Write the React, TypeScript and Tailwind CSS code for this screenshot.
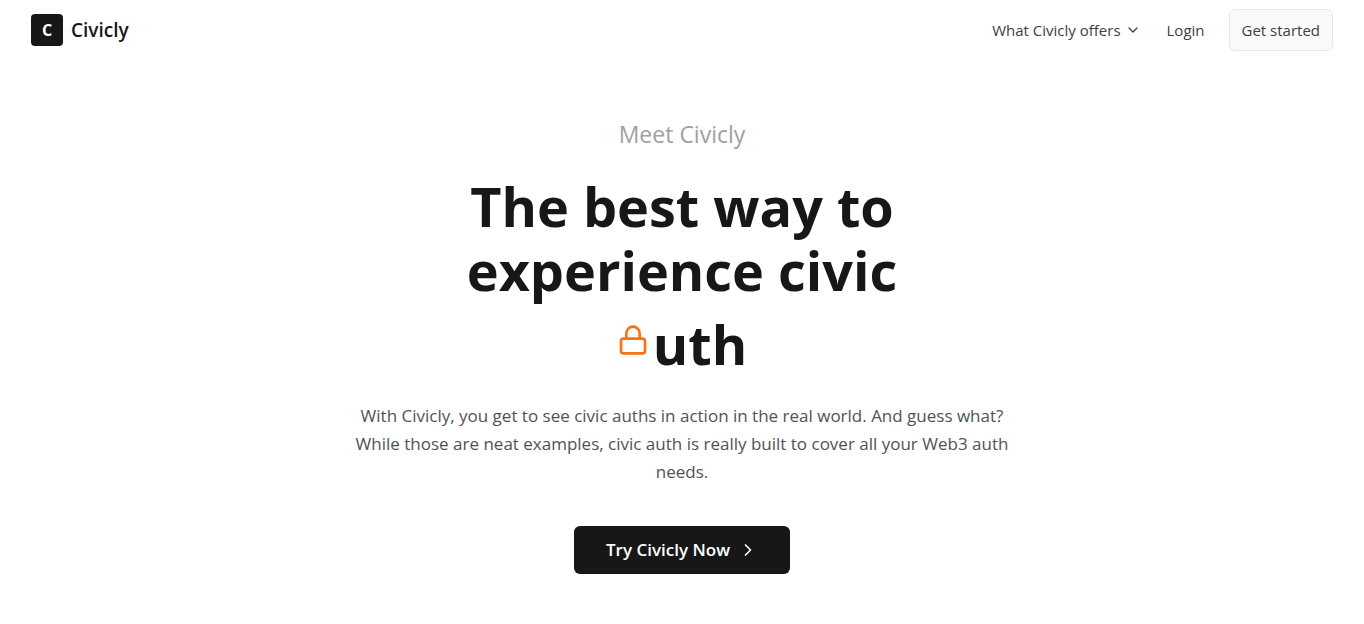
import { ChevronDown, ChevronRight, Lock } from "lucide-react";

function Header() {
  return (
    <header className="flex items-center justify-between px-[31px] py-[9px]">
      <a href="#" className="flex items-center gap-2">
        <span className="flex size-8 items-center justify-center rounded bg-neutral-900 text-base font-bold text-white">
          C
        </span>
        <span className="text-[19px] font-semibold text-neutral-900">Civicly</span>
      </a>
      <nav className="flex items-center gap-6 text-[15px] text-neutral-700">
        <button type="button" className="flex items-center gap-1 pr-0.5">
          What Civicly offers
          <ChevronDown className="size-4" />
        </button>
        <a href="#login">Login</a>
        <a
          href="#start"
          className="flex h-[42px] items-center rounded-md border border-neutral-200 bg-neutral-50 px-3"
        >
          Get started
        </a>
      </nav>
    </header>
  );
}

function Hero() {
  return (
    <main className="flex flex-col items-center px-4 pt-[58px] pb-12 text-center">
      <p className="text-[23px] leading-8 text-neutral-400">Meet Civicly</p>
      <h1 className="mt-6 text-[54px] leading-16 font-bold text-neutral-900">
        <span className="block">The best way to</span>
        <span className="block">experience civic</span>
        <span className="mt-2.5 flex items-center justify-center gap-1">
          <Lock className="mb-2 size-8 text-[#f97316]" />
          uth
        </span>
      </h1>
      <p className="mt-[26px] max-w-[672px] text-[17px] leading-7 text-neutral-600">
        With Civicly, you get to see civic auths in action in the real world. And guess what? While
        those are neat examples, civic auth is really built to cover all your Web3 auth needs.
      </p>
      <button
        type="button"
        className="mt-10 flex h-12 items-center gap-2 rounded-md bg-neutral-900 px-8 text-[17px] font-semibold text-white"
      >
        Try Civicly Now
        <ChevronRight className="size-5" />
      </button>
    </main>
  );
}

export default function App() {
  return (
    <div className="min-h-screen bg-white font-['Open_Sans','Noto_Sans',sans-serif]">
      <Header />
      <Hero />
    </div>
  );
}
